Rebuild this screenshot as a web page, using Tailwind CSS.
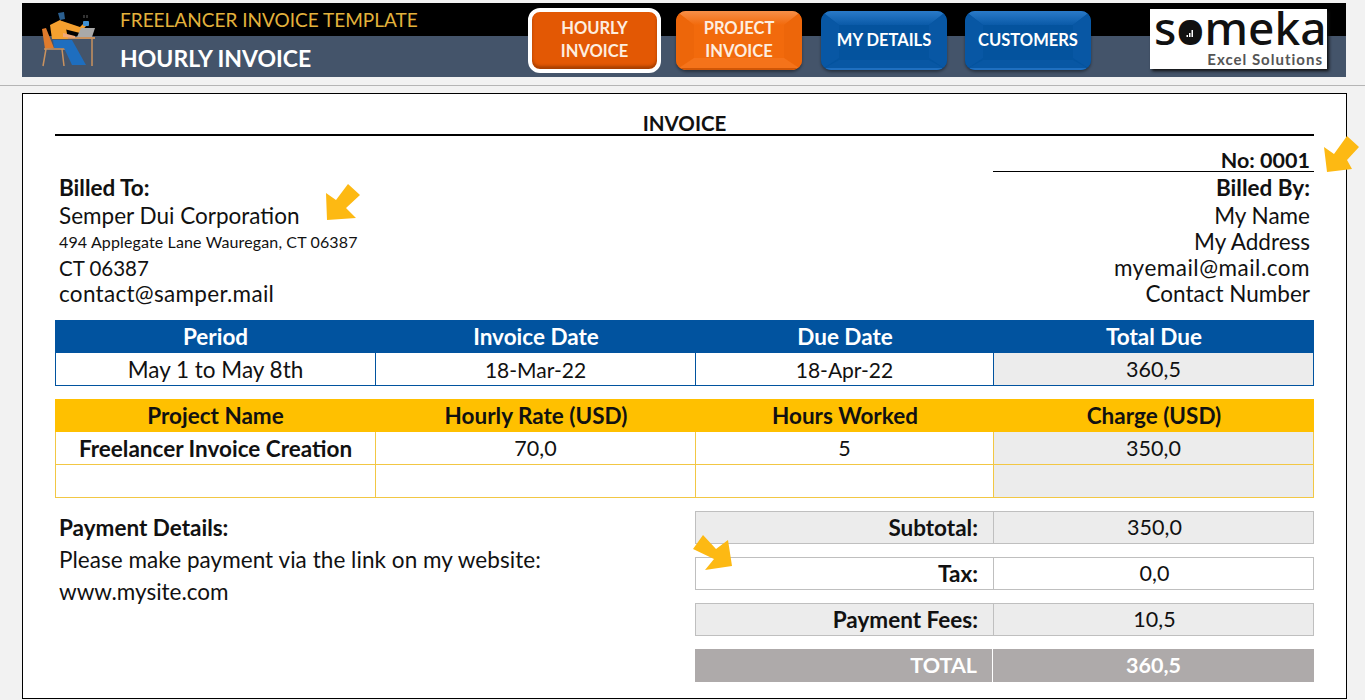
<!DOCTYPE html>
<html lang="en">
<head>
    <meta charset="UTF-8">
    <title>Freelancer Invoice Template</title>
    <script src="https://cdn.jsdelivr.net/npm/@tailwindcss/browser@4"></script>
</head>
<body class="relative w-[1365px] h-[700px] overflow-hidden bg-[#f2f2f2] font-['Lato','Open_Sans',sans-serif] text-[22.5px] text-[#111]">
    <!-- Header band -->
    <div class="ml-[22px] mt-[3px] w-[1324px] h-[74px] flex bg-[linear-gradient(#000_33px,#44546a_33px)] pt-[4px]">
        <svg class="ml-[18px] mt-[3px] w-[58px] h-[60px] shrink-0" viewBox="40 10 58 60">
            <path d="M42 29 L46 28 L54 48 L45 49 Z" fill="#e07b2c"/>
            <path d="M44 49 H65 M46 49 L43 66 M62 49 L64 66" stroke="#c9925f" stroke-width="1.5" fill="none"/>
            <path d="M63 37 H95 V39 H63 Z" fill="#c9925f"/>
            <path d="M92 39 V66" stroke="#c9925f" stroke-width="1.5"/>
            <path d="M53 40 H72 L86 65 H72 L64 48 H54 Z" fill="#1e6ebf"/>
            <path d="M50 25 L60 20 L65 23 L68 39 L52 39 Z" fill="#f4a02f"/>
            <path d="M62 21 L80 27 L84 23 L86 26 L80 33 L64 29 Z" fill="#f4a02f"/>
            <path d="M63 33 L75 36 V38 L63 37 Z" fill="#efa878"/>
            <path d="M58 13 L64 12 L65 19 L60 20 Z" fill="#2b5f8f"/>
            <rect x="83" y="21" width="6" height="5" rx="1" fill="#3f8fd0"/>
            <path d="M84 15 V18 M87 15 V18" stroke="#666" stroke-width="1"/>
            <path d="M77 37 L81 28 H95 L92 37 Z" fill="#a9a9a9"/>
        </svg>
        <div class="ml-[22px] w-[408px] shrink-0">
            <div class="h-[27px] flex items-center text-[19px] text-[#e3b23c]">FREELANCER INVOICE TEMPLATE</div>
            <div class="mt-[9px] h-[30px] flex items-center text-[23px] font-bold text-white">HOURLY INVOICE</div>
        </div>
        <!-- Menu buttons -->
        <div class="flex items-center h-[66px] text-[16.5px] font-bold leading-[23px] text-center">
            <div class="relative w-[133px] h-[65px] rounded-[12px] border-[4px] border-white bg-[#e35804] text-[#fdeee0] flex items-center justify-center shadow-[inset_0_-3px_3px_#a83f00]">
                <span>HOURLY<br>INVOICE</span>
            </div>
            <div class="relative ml-[15px] w-[126px] h-[59px] rounded-[10px] overflow-hidden bg-[#f26a0c] text-[#fdeee0] flex items-center justify-center shadow-[0_2px_3px_rgba(0,0,0,0.4)]">
                <svg class="absolute inset-0 w-full h-full" viewBox="0 0 126 59" preserveAspectRatio="none">
                    <defs>
                        <linearGradient id="orangeTop" x1="0" y1="0" x2="0" y2="1">
                            <stop offset="0" stop-color="#f78f48"/>
                            <stop offset="1" stop-color="#f26a0c"/>
                        </linearGradient>
                    </defs>
                    <path d="M0 0 H126 L108 14 H18 Z" fill="url(#orangeTop)"/>
                    <path d="M0 0 L18 14 V47 L0 59 Z" fill="#ed660a"/>
                    <path d="M126 0 L108 14 V47 L126 59 Z" fill="#ed660a"/>
                    <path d="M0 59 L18 47 H108 L126 59 Z" fill="#f5731a"/>
                    <path d="M0 57 H126 V59 H0 Z" fill="#d05606"/>
                </svg>
                <span class="relative">PROJECT<br>INVOICE</span>
            </div>
            <div class="relative ml-[19px] w-[126px] h-[59px] rounded-[10px] overflow-hidden bg-[#04539e] text-white flex items-center justify-center shadow-[0_2px_3px_rgba(0,0,0,0.4)]">
                <svg class="absolute inset-0 w-full h-full" viewBox="0 0 126 59" preserveAspectRatio="none">
                    <defs>
                        <linearGradient id="blueTop" x1="0" y1="0" x2="0" y2="1">
                            <stop offset="0" stop-color="#2a7ac8"/>
                            <stop offset="1" stop-color="#0a5aa8"/>
                        </linearGradient>
                    </defs>
                    <path d="M0 0 H126 L108 14 H18 Z" fill="url(#blueTop)"/>
                    <path d="M0 0 L18 14 V47 L0 59 Z" fill="#0857a4"/>
                    <path d="M126 0 L108 14 V47 L126 59 Z" fill="#0857a4"/>
                    <path d="M0 59 L18 49 H108 L126 59 Z" fill="#0857a4"/>
                    <path d="M0 57 H126 V59 H0 Z" fill="#1f6fc0"/>
                </svg>
                <span class="relative">MY DETAILS</span>
            </div>
            <div class="relative ml-[18px] w-[126px] h-[59px] rounded-[10px] overflow-hidden bg-[#04539e] text-white flex items-center justify-center shadow-[0_2px_3px_rgba(0,0,0,0.4)]">
                <svg class="absolute inset-0 w-full h-full" viewBox="0 0 126 59" preserveAspectRatio="none">
                    <path d="M0 0 H126 L108 14 H18 Z" fill="url(#blueTop)"/>
                    <path d="M0 0 L18 14 V47 L0 59 Z" fill="#0857a4"/>
                    <path d="M126 0 L108 14 V47 L126 59 Z" fill="#0857a4"/>
                    <path d="M0 59 L18 49 H108 L126 59 Z" fill="#0857a4"/>
                    <path d="M0 57 H126 V59 H0 Z" fill="#1f6fc0"/>
                </svg>
                <span class="relative">CUSTOMERS</span>
            </div>
        </div>
        <!-- Logo -->
        <div class="relative ml-[59px] w-[177px] h-[60px] mt-[2px] bg-white shadow-[2px_2px_3px_#111] pl-[4px] pr-[4px] text-right">
            <div class="h-[37px] text-[46px] leading-[37px] font-['Noto_Sans',sans-serif] font-medium text-[#111] text-left">someka</div>
            <div class="mt-[4px] text-[15px] leading-[18px] font-bold tracking-[1px] text-[#555]">Excel Solutions</div>
            <svg class="absolute left-[30px] top-[14px] w-[20px] h-[20px]" viewBox="0 0 20 20">
                <circle cx="10" cy="10" r="10" fill="#111"/>
                <path d="M6.500 12h1.500v2H6.500z M9 10h1.500v4H9z M11.500 7H13v7h-1.500z" fill="#fff"/>
            </svg>
        </div>
    </div>
    <div class="mt-[8px] h-[1px] bg-[#b5b5b5]"></div>

    <!-- Invoice sheet -->
    <div class="ml-[22px] mt-[7px] w-[1325px] h-[606px] border border-black bg-white px-[32px] pt-[18px]">
        <div class="h-[24px] border-b-2 border-black flex items-center justify-center font-bold text-[20.5px]">INVOICE</div>
        <div class="ml-auto mt-[14px] w-[321px] h-[22px] border-b border-black text-right pr-[4px] font-bold text-[21.5px] leading-[21px]">No: 0001</div>
        <div class="mt-[3px] flex justify-between px-[4px] leading-[26px]">
            <div>
                <div class="h-[28px] font-bold">Billed To:</div>
                <div class="h-[26px]">Semper Dui Corporation</div>
                <div class="h-[26px] text-[16px] tracking-[0.13px]">494 Applegate Lane Wauregan, CT 06387</div>
                <div class="h-[26px] text-[20.5px]">CT 06387</div>
                <div class="h-[26px] tracking-[0.3px]">contact@samper.mail</div>
            </div>
            <div class="text-right">
                <div class="h-[28px] font-bold">Billed By:</div>
                <div class="h-[26px]">My Name</div>
                <div class="h-[26px]">My Address</div>
                <div class="h-[26px] tracking-[0.5px]">myemail@mail.com</div>
                <div class="h-[26px]">Contact Number</div>
            </div>
        </div>

        <!-- Period table -->
        <div class="mt-[13px] grid grid-cols-[321px_320px_298px_320px] grid-rows-[33px_33px] text-center leading-[33px]">
            <div class="bg-[#01539f] text-white font-bold">Period</div>
            <div class="bg-[#01539f] text-white font-bold">Invoice Date</div>
            <div class="bg-[#01539f] text-white font-bold">Due Date</div>
            <div class="bg-[#01539f] text-white font-bold">Total Due</div>
            <div class="border-x border-b border-[#01539f]">May 1 to May 8th</div>
            <div class="border-r border-b border-[#01539f] text-[21px]">18-Mar-22</div>
            <div class="border-r border-b border-[#01539f] text-[21px]">18-Apr-22</div>
            <div class="border-r border-b border-[#01539f] bg-[#ececec] text-[21.5px]">360,5</div>
        </div>

        <!-- Project table -->
        <div class="mt-[13px] grid grid-cols-[321px_320px_298px_320px] grid-rows-[33px_33px_33px] text-center leading-[33px]">
            <div class="bg-[#ffc000] font-bold">Project Name</div>
            <div class="bg-[#ffc000] font-bold">Hourly Rate (USD)</div>
            <div class="bg-[#ffc000] font-bold">Hours Worked</div>
            <div class="bg-[#ffc000] font-bold">Charge (USD)</div>
            <div class="border-x border-b border-[#f2c744] font-bold">Freelancer Invoice Creation</div>
            <div class="border-r border-b border-[#f2c744] text-[21.5px]">70,0</div>
            <div class="border-r border-b border-[#f2c744] text-[21.5px]">5</div>
            <div class="border-r border-b border-[#f2c744] bg-[#ececec] text-[21.5px]">350,0</div>
            <div class="border-x border-b border-[#f2c744]"></div>
            <div class="border-r border-b border-[#f2c744]"></div>
            <div class="border-r border-b border-[#f2c744]"></div>
            <div class="border-r border-b border-[#f2c744] bg-[#ececec]"></div>
        </div>

        <!-- Payment and totals -->
        <div class="mt-[13px] flex">
            <div class="w-[640px] pl-[4px]">
                <div class="h-[33px] leading-[33px] font-bold">Payment Details:</div>
                <div class="h-[32px] leading-[32px] tracking-[0.05px]">Please make payment via the link on my website:</div>
                <div class="h-[32px] leading-[32px]">www.mysite.com</div>
            </div>
            <div class="flex flex-col gap-[13px] w-[619px] leading-[31px]">
                <div class="grid grid-cols-[298px_321px] h-[33px] border border-[#bfbfbf] bg-[#ececec]">
                    <div class="border-r border-[#bfbfbf] text-right pr-[15px] font-bold">Subtotal:</div>
                    <div class="text-center text-[21.5px]">350,0</div>
                </div>
                <div class="grid grid-cols-[298px_321px] h-[33px] border border-[#bfbfbf]">
                    <div class="border-r border-[#bfbfbf] text-right pr-[15px] font-bold">Tax:</div>
                    <div class="text-center text-[21.5px]">0,0</div>
                </div>
                <div class="grid grid-cols-[298px_321px] h-[33px] border border-[#bfbfbf] bg-[#ececec]">
                    <div class="border-r border-[#bfbfbf] text-right pr-[15px] font-bold">Payment Fees:</div>
                    <div class="text-center text-[21.5px]">10,5</div>
                </div>
                <div class="grid grid-cols-[298px_321px] h-[33px] bg-[#aeaaaa] text-white font-bold leading-[33px] text-[21.5px]">
                    <div class="border-r border-white text-right pr-[15px]">TOTAL</div>
                    <div class="text-center">360,5</div>
                </div>
            </div>
        </div>
    </div>

    <!-- Callout arrows -->
    <svg class="absolute inset-0 w-[1365px] h-[700px] pointer-events-none" viewBox="0 0 1365 700" fill="#fdb913">
        <polygon points="1347,136 1359,147 1347,160 1352,169 1327,172 1324,147 1334,154"/>
        <polygon points="348,184 360,195 346,208 356,218 327,220 326,193 336,200"/>
        <polygon points="693,549 703,535 716,549 728,540 732,566 705,570 714,559"/>
    </svg>
</body>
</html>
